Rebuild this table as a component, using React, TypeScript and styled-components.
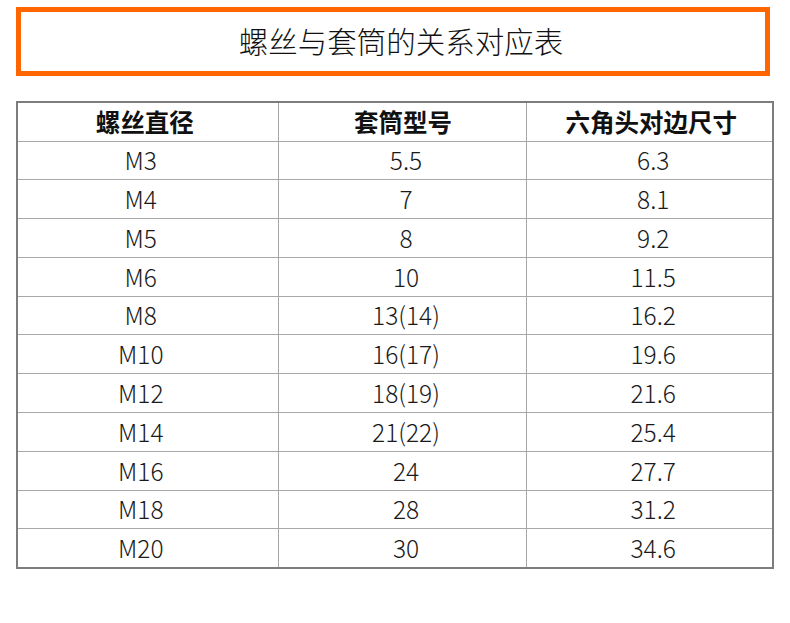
import React from "react";
import styled, { createGlobalStyle } from "styled-components";

const Global = createGlobalStyle`
  html, body { margin: 0; padding: 0; background: #ffffff; }
  body { font-family: "Noto Sans CJK SC", "Noto Sans", sans-serif; }
`;

const Page = styled.div`
  width: 790px;
  height: 623px;
  box-sizing: border-box;
  padding: 7px 18px 0 16px;
  display: flex;
  flex-direction: column;
  gap: 25px;
  background: #fff;
`;

const TitleBox = styled.div`
  width: 754px;
  height: 69px;
  box-sizing: border-box;
  border: 5px solid #ff6600;
  padding-left: 16px;
  padding-bottom: 2px;
  display: flex;
  align-items: center;
  justify-content: center;
`;

const Title = styled.h1`
  margin: 0;
  font-family: "Noto Sans CJK SC", sans-serif;
  font-weight: 300;
  font-size: 29.5px;
  line-height: 1;
  color: #111;
`;

const Table = styled.table`
  width: 756px;
  border-collapse: collapse;
  border: 2px solid #7d7d7d;
  table-layout: fixed;
`;

const shiftPadding = (o: number) =>
  o < 0 ? `0 ${-o * 2}px 0 0` : `0 0 0 ${o * 2}px`;

const HeadCell = styled.th<{ $shift?: number }>`
  height: 37.5px;
  padding: ${(p) => shiftPadding(p.$shift ?? 0)};
  border: 1px solid #a8a8a8;
  font-family: "Noto Sans CJK SC", sans-serif;
  font-weight: 700;
  font-size: 24.5px;
  line-height: 1;
  color: #111;
  text-align: center;
  vertical-align: middle;
`;

const Cell = styled.td<{ $shift?: number }>`
  height: 37.8px;
  padding: ${(p) => shiftPadding(p.$shift ?? 0)};
  border: 1px solid #a8a8a8;
  font-family: "Noto Sans CJK SC", sans-serif;
  font-weight: 300;
  font-size: 24.5px;
  line-height: 1;
  color: #1a1a1a;
  text-align: center;
  vertical-align: middle;
`;

const rows: [string, string, string][] = [
  ["M3", "5.5", "6.3"],
  ["M4", "7", "8.1"],
  ["M5", "8", "9.2"],
  ["M6", "10", "11.5"],
  ["M8", "13(14)", "16.2"],
  ["M10", "16(17)", "19.6"],
  ["M12", "18(19)", "21.6"],
  ["M14", "21(22)", "25.4"],
  ["M16", "24", "27.7"],
  ["M18", "28", "31.2"],
  ["M20", "30", "34.6"],
];

export default function App() {
  return (
    <>
      <Global />
      <Page>
        <TitleBox>
          <Title>螺丝与套筒的关系对应表</Title>
        </TitleBox>
        <Table>
          <colgroup>
            <col style={{ width: 261 }} />
            <col style={{ width: 248 }} />
            <col style={{ width: 247 }} />
          </colgroup>
          <thead>
            <tr>
              <HeadCell $shift={-3}>螺丝直径</HeadCell>
              <HeadCell $shift={1}>套筒型号</HeadCell>
              <HeadCell $shift={2}>六角头对边尺寸</HeadCell>
            </tr>
          </thead>
          <tbody>
            {rows.map((r) => (
              <tr key={r[0]}>
                <Cell $shift={-7}>{r[0]}</Cell>
                <Cell $shift={4}>{r[1]}</Cell>
                <Cell $shift={4}>{r[2]}</Cell>
              </tr>
            ))}
          </tbody>
        </Table>
      </Page>
    </>
  );
}
